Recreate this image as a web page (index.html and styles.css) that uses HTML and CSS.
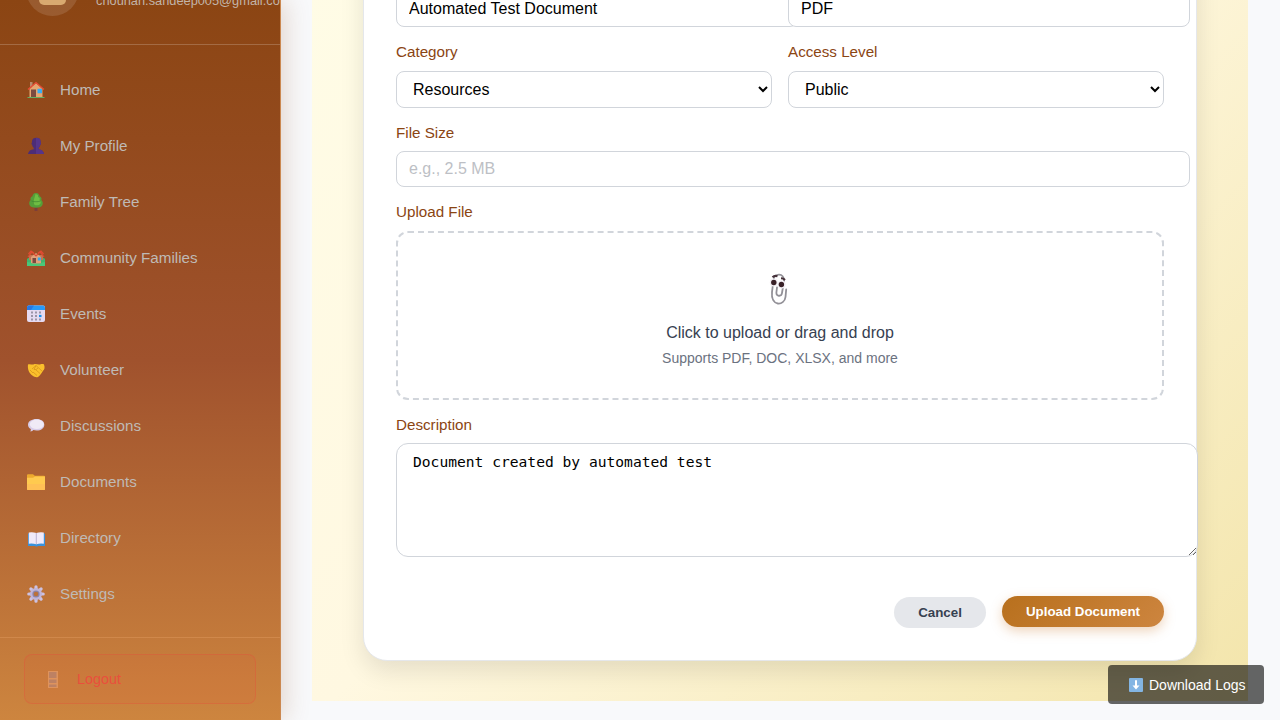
FILE: index.html
```html
<!DOCTYPE html>
<html lang="en">
<head>
<meta charset="utf-8">
<title>Upload Document</title>
<link rel="stylesheet" href="styles.css">
</head>
<body>
<div class="app">
  <aside class="sidebar">
    <div class="profile">
      <div class="avatar"><span class="avatar-body"></span></div>
      <div class="email">chouhan.sandeep005@gmail.com</div>
    </div>
    <nav class="nav">
      <a class="nav-item"><svg class="icon" viewBox="0 0 18 18"><path d="M3 1h2.500v5H3z" fill="#b98b6e"/><path d="M2.500 8 9 2l6.500 6v8h-13z" fill="#e6a671"/><path d="M1 8.500 9 1.500l8 7" fill="none" stroke="#ea4a35" stroke-width="1.300"/><path d="M4 8.500h5V16H4z" fill="#7b4a40"/><rect x="10.500" y="7.800" width="4.500" height="4.500" rx=".6" fill="#35adf5"/><path d="M.5 16.500h17" stroke="#63b063"/></svg>Home</a>
      <a class="nav-item"><svg class="icon" viewBox="0 0 18 18"><path d="M5 4c0-4.500 8.500-4.500 8.500 0v1.500c.8.300.6 2-.2 2.200-.3 1.500-1 2.500-1.800 3.200v1.400c2.800.3 5 1.600 5.500 4.700H1c.5-3.200 2.700-4.400 5.800-4.700v-1.400C6 10.200 5.400 9.200 5.100 7.700 4.300 7.300 4.200 5.800 5 5.500z" fill="#4d2d76"/><path d="M9 .8c3 0 4.500 1.200 4.500 3.200v1.500c.8.300.6 2-.2 2.200-.3 1.500-1 2.500-1.800 3.200v1.400c2.800.3 5 1.600 5.500 4.700H9z" fill="#56358a"/></svg>My Profile</a>
      <a class="nav-item"><svg class="icon" viewBox="0 0 18 18"><path d="M7.500 13h3v5h-3z" fill="#7c3e3a"/><path d="M9 0c2.500 0 3.200 1.500 3.600 3.300 2 .8 2.300 2.600 1.700 3.800 2 1.500 2.200 5.500-.8 7-3 .9-6 .9-9 0-3-1.500-2.800-5.500-.8-7-.6-1.200-.3-3 1.700-3.800C5.800 1.500 6.500 0 9 0z" fill="#559f39"/><path d="M8.500 1c2.500.3 2.800 1.600 2.500 3 1.600.3 2.200 1.500 1.500 3 2 1.300 1.400 4.200-.5 5-3 .8-5.500 0-5-2-.8-2 .8-6 1.500-9z" fill="#6fbd43"/><path d="M4.500 8c3 1 6 1 9 0" fill="none" stroke="#3d8430" stroke-width=".7"/></svg>Family Tree</a>
      <a class="nav-item"><svg class="icon" viewBox="0 0 18 18"><path d="M0 10c2-2 3.500-2 5 0h8c2-2 3.500-2 5 0v7H0z" fill="#42b56c"/><path d="M2 6h14v5H2z" fill="#c47652"/><path d="M4 8l5-4 5 4v6.500H4z" fill="#e2a078"/><path d="m1 8 4-5 4 4 4-4 4 5M1.500 5 4 2l3 2M11 4l3-2 2.500 3" fill="none" stroke="#e24b32" stroke-width="1.200"/><path d="M5.500 9h3.500v5H5.500z" fill="#7b4a40"/><path d="M10.800 8.500h3v3h-3z" fill="#36a8ef"/><path d="M0 13q4 0 6 2h7q2-2 5-2v4H0z" fill="#49c879"/></svg>Community Families</a>
      <a class="nav-item"><svg class="icon" viewBox="0 0 18 18"><rect y=".5" width="18" height="16.500" rx="2" fill="#e5daf1"/><path d="M0 5V2.500Q0 .5 2 .5h14q2 0 2 2V5z" fill="#299af8"/><path d="M0 5V2.500Q0 .5 2 .5h5L4 5z" fill="#2878e5"/><path d="M4 7.500h2M8 7.500h2M12 7.500h2M4 11h2M8 11h2M4 14.500h2M8 14.500h2M12 14.500h2" stroke="#9b95a8" stroke-width="2"/><path d="M12 11h2.500" stroke="#1492ed" stroke-width="2.200"/></svg>Events</a>
      <a class="nav-item"><svg class="icon" viewBox="0 0 18 18"><path d="M1 3.500c2-1 4 .5 6-.3 2-.8 4 .8 6 .2 1.500-.3 3-.5 4 .1 1 3 .8 5-1.200 6.500C14.500 12.500 12 16.300 9.500 16.300S3.500 13.500 2 10.800C.8 8 .7 5.500 1 3.500z" fill="#fac02c"/><path d="m5 8 4-3.500 6.500 6M8.500 8.500l4.500 4M6 11l4 3.500M3 9l3 3M9 4.500 7 8.500q2 1 4-1.500" fill="none" stroke="#d8951c" stroke-width=".8"/></svg>Volunteer</a>
      <a class="nav-item"><svg class="icon" viewBox="0 0 18 18"><path d="M9.500 2c4.500 0 7.800 2.200 7.800 5.700S14 13.500 9.500 13.500c-1.200 0-2.200-.1-3.200-.4-.5.800-1.500 1.300-3 1.400.5-.8.600-1.600.5-2.500C2 11 1 9.500 1 7.700 1 4.200 5 2 9.500 2z" fill="#d8cce8"/><ellipse cx="9.800" cy="7.300" rx="7" ry="4.800" fill="#f0eaf6"/></svg>Discussions</a>
      <a class="nav-item"><svg class="icon" viewBox="0 0 18 18"><path d="M0 2.200q0-1 1-1h5l1.800 1.600H17q1 0 1 1V10H0z" fill="#eeaa2e"/><path d="M0 4.800h6L8 3.500h10V16q0 1-1 1H1q-1 0-1-1z" fill="#ffca4f"/><path d="M0 11h18v5q0 1-1 1H1q-1 0-1-1z" fill="#ffc055"/></svg>Documents</a>
      <a class="nav-item"><svg class="icon" viewBox="0 0 18 18"><path d="M1 4.500h17v12.500h-7q-1.500 1-3 0H1z" fill="#3992dd"/><path d="M1.800 3.500q4-.6 7.500.5 3.500-1.100 7.500-.5v11.200q-4-.6-7.500.6-3.500-1.200-7.500-.6z" fill="#f0eafa"/><path d="M9.300 4v11.300" stroke="#aaa2ca" stroke-width=".8"/></svg>Directory</a>
      <a class="nav-item"><svg class="icon" viewBox="0 0 18 18"><path d="M9 1.800v14.400M1.800 9h14.400M3.900 3.900l10.200 10.200M14.100 3.900 3.900 14.100" stroke="#cdc2e2" stroke-width="3.200" stroke-linecap="round"/><circle cx="9" cy="9" r="6" fill="#c1b5d8"/><circle cx="9" cy="9" r="3.600" fill="#8d84a6"/><circle cx="9" cy="9" r="2.300" fill="#bc7138"/></svg>Settings</a>
    </nav>
    <div class="sidebar-footer">
      <a class="logout"><svg class="door" viewBox="0 0 10 17"><rect width="10" height="17" fill="#e59c68"/><path d="M1 1h7.500v6H1zM1 8.500h7.500V12H1zM1 13.500h7.500V16H1z" fill="#b98470"/></svg>Logout</a>
    </div>
  </aside>

  <main class="main">
    <section class="panel">
      <form class="card">
        <div class="row top-row">
          <input class="input" value="Automated Test Document">
          <input class="input" value="PDF">
        </div>
        <div class="row">
          <div class="field"><label class="label wide">Category</label><select class="select"><option>Resources</option></select></div>
          <div class="field"><label class="label wide">Access Level</label><select class="select"><option>Public</option></select></div>
        </div>
        <div class="field"><label class="label">File Size</label><input class="input" placeholder="e.g., 2.5 MB"></div>
        <div class="field"><label class="label wide">Upload File</label>
          <div class="dropzone">
            <svg class="clip" viewBox="0 0 20 34"><path d="M4.500 8C5 1 15.500.5 15 9L13 21c-.5 4-6 3.500-5.600-.5l.6-5M4.500 8 3 20c-1.500 15 12.500 14 13.500 5l.7-7.500" fill="none" stroke="#929097" stroke-width="1.800" stroke-linecap="round"/><circle cx="4.800" cy="10.500" r="4" fill="#f3eff5"/><circle cx="12.600" cy="12.500" r="4" fill="#f3eff5"/><circle cx="4.800" cy="10.500" r="2.700" fill="#392127"/><circle cx="12.400" cy="12.500" r="2.700" fill="#392127"/><path d="M3.500 5.200q2-2 5-1M12 6.300q2.500 0 4 1.700" fill="none" stroke="#46313a" stroke-width="2"/></svg>
            <div class="drop-title">Click to upload or drag and drop</div>
            <div class="drop-note">Supports PDF, DOC, XLSX, and more</div>
          </div>
        </div>
        <div class="field"><label class="label">Description</label><textarea class="textarea" spellcheck="false">Document created by automated test</textarea></div>
        <div class="actions">
          <button class="btn cancel" type="button">Cancel</button>
          <button class="btn upload" type="button">Upload Document</button>
        </div>
      </form>
    </section>
  </main>
</div>
<div class="logs"><svg class="logs-icon" viewBox="0 0 14 14"><rect width="14" height="14" rx="1" fill="#83b5e3"/><path d="M7 2.200v7" stroke="#fff" stroke-width="2"/><path d="M3.500 7.500h7L7 11.500z" fill="#fff"/></svg>Download Logs</div>
</body>
</html>
```

FILE: styles.css
```css
* { box-sizing: border-box; }
body {
  margin: 0;
  height: 720px;
  overflow: hidden;
  background: #f8f9fb;
  font-family: "Liberation Sans", Arial, sans-serif;
}
.app { display: flex; height: 720px; overflow: hidden; }

.sidebar {
  display: flex;
  flex-direction: column;
  justify-content: flex-end;
  flex: none;
  width: 281px;
  height: 720px;
  border-right: 1px solid #cb8850;
  background: linear-gradient(180deg, #8b4513 0%, #a0522d 50%, #cd853f 100%);
  box-shadow: 4px 0 24px rgba(139, 69, 19, 0.2);
}
.profile {
  display: flex;
  align-items: flex-end;
  gap: 17px;
  flex: none;
  height: 100px;
  padding: 0 0 28px 26px;
  border-bottom: 1px solid rgba(255, 255, 255, 0.2);
  overflow: hidden;
}
.avatar {
  display: flex;
  justify-content: center;
  align-items: flex-end;
  flex: none;
  width: 53px;
  height: 53px;
  padding-bottom: 11px;
  border-radius: 50%;
  background: rgba(255, 255, 255, 0.12);
}
.avatar-body { width: 27px; height: 14px; border-radius: 5px; background: #d8a970; }
.email {
  padding-bottom: 7px;
  color: #c2b4a9;
  font-size: 12.8px;
  line-height: 16px;
  white-space: nowrap;
}
.nav { flex: none; height: 592px; padding: 16px 0 0; }
.nav-item {
  display: flex;
  align-items: center;
  gap: 15px;
  height: 56px;
  padding-left: 27px;
  color: #bfbab5;
  font-size: 15.2px;
}
.icon { width: 18px; height: 18px; margin-top: 2px; }
.sidebar-footer {
  flex: none;
  height: 83px;
  padding: 16px 24px;
  border-top: 1px solid #d0884b;
}
.logout {
  display: flex;
  align-items: center;
  gap: 19px;
  height: 50px;
  padding: 0 0 1px 23px;
  border: 1px solid rgba(231, 76, 60, 0.3);
  border-radius: 8px;
  background: rgba(231, 76, 60, 0.1);
  color: #e94f3c;
  font-size: 14.4px;
}
.door { width: 10px; height: 17px; margin-top: 1px; opacity: 0.75; }

.main {
  display: flex;
  flex-direction: column;
  justify-content: flex-end;
  flex: 1;
  min-width: 0;
  height: 720px;
  padding: 0 32px 19px 31px;
}
.panel {
  flex: none;
  height: 900px;
  padding: 40px 51px;
  display: flex;
  flex-direction: column;
  justify-content: flex-end;
  background: linear-gradient(135deg, #fffde7 0%, #fff8e1 50%, #f3e5ab 100%);
}
.card {
  display: flex;
  flex-direction: column;
  justify-content: flex-end;
  gap: 16px;
  flex: none;
  height: 760px;
  padding: 32px;
  border: 1px solid #e5e7eb;
  border-radius: 24px;
  background: #fff;
  box-shadow: 0 10px 25px rgba(0, 0, 0, 0.1);
}
.row { display: grid; grid-template-columns: 376px 376px; gap: 16px; }
.field { display: flex; flex-direction: column; min-width: 0; }
.label {
  margin-bottom: 9px;
  color: #8b4513;
  font-size: 15.2px;
  line-height: 18px;
}
.wide { margin-bottom: 10px; }
.input {
  width: calc(100% + 26px);
  height: 36px;
  padding: 0 12px;
  border: 1px solid #d1d5db;
  border-radius: 8px;
  background: #fff;
  color: #000;
  font: 16px "Liberation Sans", Arial, sans-serif;
}
.top-row .input { width: 402px; }
.input::placeholder { color: #bdbfc5; opacity: 1; }
.select {
  height: 37px;
  padding: 0 0 0 12px;
  border: 1px solid #d1d5db;
  border-radius: 8px;
  background: #fff;
  color: #000;
  font: 16px "Liberation Sans", Arial, sans-serif;
}
.dropzone {
  display: flex;
  flex-direction: column;
  align-items: center;
  height: 169px;
  padding-top: 39px;
  border: 2px dashed #d1d5db;
  border-radius: 12px;
}
.clip { width: 20px; height: 34px; margin-right: 2px; }
.drop-title { margin-top: 17px; color: #374151; font-size: 16px; line-height: 20px; }
.drop-note { margin-top: 6px; color: #6b7280; font-size: 14px; line-height: 18px; }
.textarea {
  width: 802px;
  height: 114px;
  padding: 8px 16px;
  border: 1px solid #d1d5db;
  border-radius: 12px;
  color: #000;
  font: 14.62px/19px "DejaVu Sans Mono", monospace;
}
.actions {
  display: flex;
  justify-content: flex-end;
  align-items: flex-start;
  gap: 16px;
  height: 32px;
  margin-top: 23px;
}
.btn {
  height: 31px;
  padding: 0;
  border: 0;
  border-radius: 16px;
  font: bold 13.333px "Liberation Sans", Arial, sans-serif;
}
.cancel { width: 92px; margin-top: 1px; background: #e5e7eb; color: #374151; }
.upload {
  width: 162px;
  background: linear-gradient(135deg, #b8701d, #cd853f);
  box-shadow: 0 4px 12px rgba(205, 133, 63, 0.35);
  color: #fff;
}

.logs {
  position: absolute;
  right: 16px;
  bottom: 16px;
  display: flex;
  align-items: center;
  gap: 6px;
  width: 156px;
  height: 39px;
  padding-left: 21px;
  border-radius: 4px;
  background: rgba(0, 0, 0, 0.6);
  color: #fff;
  font-size: 14px;
  white-space: nowrap;
}
.logs-icon { width: 14px; height: 14px; }
```
